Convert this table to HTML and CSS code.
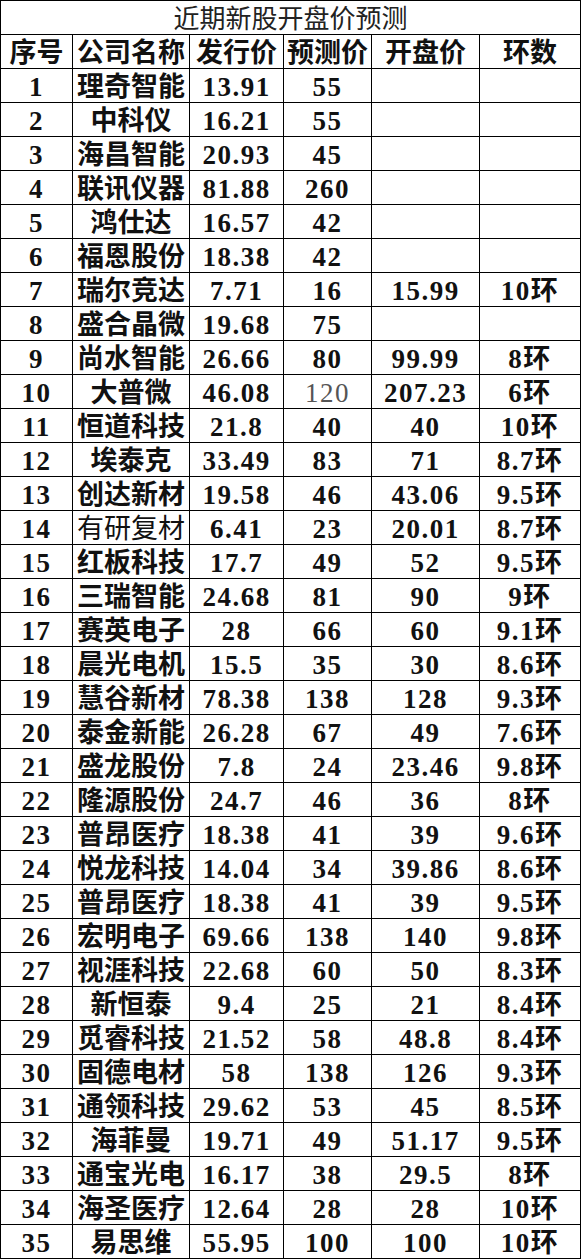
FILE: index.html
```html
<!DOCTYPE html>
<html lang="zh-CN">
<head>
<meta charset="utf-8">
<title>近期新股开盘价预测</title>
<link rel="stylesheet" href="styles.css">
</head>
<body>
<div class="sheet">
  <div class="cell title">近期新股开盘价预测</div>
  <div class="cell head">序号</div><div class="cell head">公司名称</div><div class="cell head">发行价</div><div class="cell head">预测价</div><div class="cell head">开盘价</div><div class="cell head">环数</div>
  <div class="cell">1</div><div class="cell">理奇智能</div><div class="cell">13.91</div><div class="cell">55</div><div class="cell"></div><div class="cell"></div>
  <div class="cell">2</div><div class="cell">中科仪</div><div class="cell">16.21</div><div class="cell">55</div><div class="cell"></div><div class="cell"></div>
  <div class="cell">3</div><div class="cell">海昌智能</div><div class="cell">20.93</div><div class="cell">45</div><div class="cell"></div><div class="cell"></div>
  <div class="cell">4</div><div class="cell">联讯仪器</div><div class="cell">81.88</div><div class="cell">260</div><div class="cell"></div><div class="cell"></div>
  <div class="cell">5</div><div class="cell">鸿仕达</div><div class="cell">16.57</div><div class="cell">42</div><div class="cell"></div><div class="cell"></div>
  <div class="cell">6</div><div class="cell">福恩股份</div><div class="cell">18.38</div><div class="cell">42</div><div class="cell"></div><div class="cell"></div>
  <div class="cell">7</div><div class="cell">瑞尔竞达</div><div class="cell">7.71</div><div class="cell">16</div><div class="cell">15.99</div><div class="cell">10环</div>
  <div class="cell">8</div><div class="cell">盛合晶微</div><div class="cell">19.68</div><div class="cell">75</div><div class="cell"></div><div class="cell"></div>
  <div class="cell">9</div><div class="cell">尚水智能</div><div class="cell">26.66</div><div class="cell">80</div><div class="cell">99.99</div><div class="cell">8环</div>
  <div class="cell">10</div><div class="cell">大普微</div><div class="cell">46.08</div><div class="cell light gray">120</div><div class="cell">207.23</div><div class="cell">6环</div>
  <div class="cell">11</div><div class="cell">恒道科技</div><div class="cell">21.8</div><div class="cell">40</div><div class="cell">40</div><div class="cell">10环</div>
  <div class="cell">12</div><div class="cell">埃泰克</div><div class="cell">33.49</div><div class="cell">83</div><div class="cell">71</div><div class="cell">8.7环</div>
  <div class="cell">13</div><div class="cell">创达新材</div><div class="cell">19.58</div><div class="cell">46</div><div class="cell">43.06</div><div class="cell">9.5环</div>
  <div class="cell">14</div><div class="cell light">有研复材</div><div class="cell">6.41</div><div class="cell">23</div><div class="cell">20.01</div><div class="cell">8.7环</div>
  <div class="cell">15</div><div class="cell">红板科技</div><div class="cell">17.7</div><div class="cell">49</div><div class="cell">52</div><div class="cell">9.5环</div>
  <div class="cell">16</div><div class="cell">三瑞智能</div><div class="cell">24.68</div><div class="cell">81</div><div class="cell">90</div><div class="cell">9环</div>
  <div class="cell">17</div><div class="cell">赛英电子</div><div class="cell">28</div><div class="cell">66</div><div class="cell">60</div><div class="cell">9.1环</div>
  <div class="cell">18</div><div class="cell">晨光电机</div><div class="cell">15.5</div><div class="cell">35</div><div class="cell">30</div><div class="cell">8.6环</div>
  <div class="cell">19</div><div class="cell">慧谷新材</div><div class="cell">78.38</div><div class="cell">138</div><div class="cell">128</div><div class="cell">9.3环</div>
  <div class="cell">20</div><div class="cell">泰金新能</div><div class="cell">26.28</div><div class="cell">67</div><div class="cell">49</div><div class="cell">7.6环</div>
  <div class="cell">21</div><div class="cell">盛龙股份</div><div class="cell">7.8</div><div class="cell">24</div><div class="cell">23.46</div><div class="cell">9.8环</div>
  <div class="cell">22</div><div class="cell">隆源股份</div><div class="cell">24.7</div><div class="cell">46</div><div class="cell">36</div><div class="cell">8环</div>
  <div class="cell">23</div><div class="cell">普昂医疗</div><div class="cell">18.38</div><div class="cell">41</div><div class="cell">39</div><div class="cell">9.6环</div>
  <div class="cell">24</div><div class="cell">悦龙科技</div><div class="cell">14.04</div><div class="cell">34</div><div class="cell">39.86</div><div class="cell">8.6环</div>
  <div class="cell">25</div><div class="cell">普昂医疗</div><div class="cell">18.38</div><div class="cell">41</div><div class="cell">39</div><div class="cell">9.5环</div>
  <div class="cell">26</div><div class="cell">宏明电子</div><div class="cell">69.66</div><div class="cell">138</div><div class="cell">140</div><div class="cell">9.8环</div>
  <div class="cell">27</div><div class="cell">视涯科技</div><div class="cell">22.68</div><div class="cell">60</div><div class="cell">50</div><div class="cell">8.3环</div>
  <div class="cell">28</div><div class="cell">新恒泰</div><div class="cell">9.4</div><div class="cell">25</div><div class="cell">21</div><div class="cell">8.4环</div>
  <div class="cell">29</div><div class="cell">觅睿科技</div><div class="cell">21.52</div><div class="cell">58</div><div class="cell">48.8</div><div class="cell">8.4环</div>
  <div class="cell">30</div><div class="cell">固德电材</div><div class="cell">58</div><div class="cell">138</div><div class="cell">126</div><div class="cell">9.3环</div>
  <div class="cell">31</div><div class="cell">通领科技</div><div class="cell">29.62</div><div class="cell">53</div><div class="cell">45</div><div class="cell">8.5环</div>
  <div class="cell">32</div><div class="cell">海菲曼</div><div class="cell">19.71</div><div class="cell">49</div><div class="cell">51.17</div><div class="cell">9.5环</div>
  <div class="cell">33</div><div class="cell">通宝光电</div><div class="cell">16.17</div><div class="cell">38</div><div class="cell">29.5</div><div class="cell">8环</div>
  <div class="cell">34</div><div class="cell">海圣医疗</div><div class="cell">12.64</div><div class="cell">28</div><div class="cell">28</div><div class="cell">10环</div>
  <div class="cell">35</div><div class="cell">易思维</div><div class="cell">55.95</div><div class="cell">100</div><div class="cell">100</div><div class="cell">10环</div>
</div>
</body>
</html>
```

FILE: styles.css
```css
html, body {
  margin: 0;
  padding: 0;
  background: #fff;
}

.sheet {
  display: grid;
  grid-template-columns: 71px 116px 93px 87px 107px 100px;
  grid-auto-rows: 33px;
  gap: 1px;
  padding: 1px;
  background: #000;
  width: max-content;
}

.cell {
  background: #fff;
  display: flex;
  align-items: center;
  justify-content: center;
  padding-top: 4px;
  box-sizing: border-box;
  font-family: "Liberation Serif", "Noto Sans CJK SC", serif;
  font-size: 27px;
  font-weight: 700;
  letter-spacing: 1.5px;
  line-height: 1;
  color: #111;
  white-space: nowrap;
  overflow: hidden;
}

/* company-name column: CJK glyphs sit edge to edge */
.cell:nth-child(6n+3) {
  letter-spacing: 0;
}

.head {
  letter-spacing: 0;
}

.title {
  grid-column: 1 / -1;
  font-weight: 400;
  font-size: 26px;
  letter-spacing: 0;
  color: #222;
}

.light {
  font-weight: 400;
}

.gray {
  color: #555;
}
```
